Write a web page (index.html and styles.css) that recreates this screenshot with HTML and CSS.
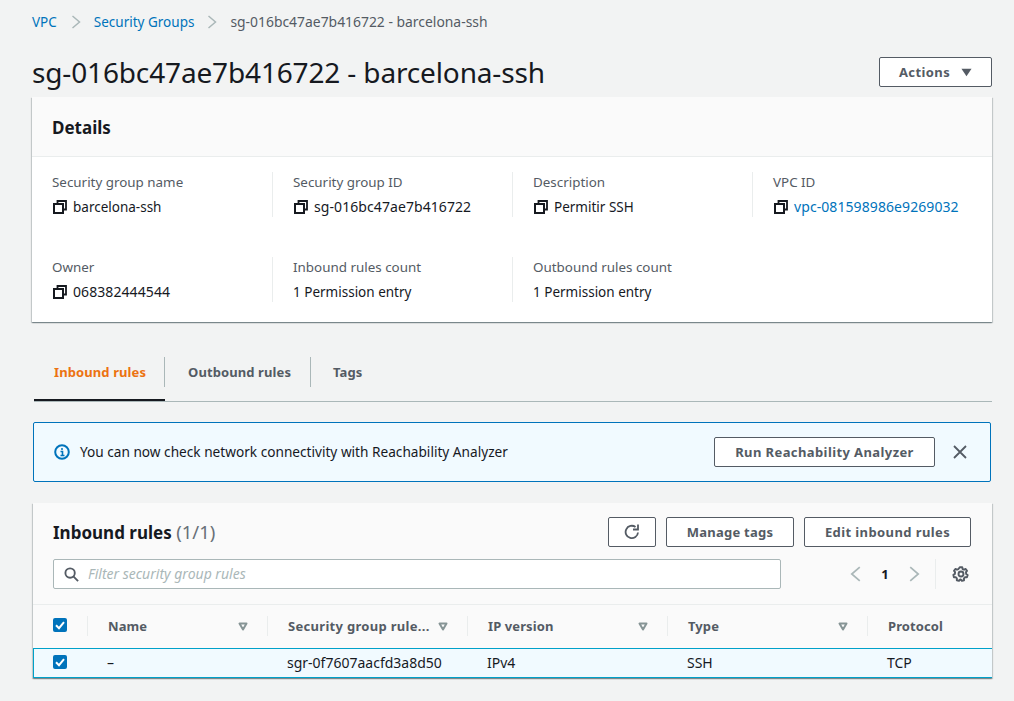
FILE: index.html
```html
<!DOCTYPE html>
<html lang="en">
<head>
    <meta charset="UTF-8">
    <meta name="viewport" content="width=device-width, initial-scale=1.0">
    <title>sg-016bc47ae7b416722 - barcelona-ssh</title>
    <link rel="stylesheet" href="styles.css">
</head>
<body>
    <svg class="icon-defs" width="0" height="0">
        <defs>
            <symbol id="copy" viewBox="0 0 14 14">
                <path d="M4.500 3V1h8.500v8.500h-2" fill="none" stroke="currentColor" stroke-width="1.800"/>
                <rect x="1" y="4" width="9" height="9" fill="none" stroke="currentColor" stroke-width="2"/>
            </symbol>
            <symbol id="caret" viewBox="0 0 10 9">
                <path d="M1.500 1.500h7L5 7.500z" fill="none" stroke="currentColor" stroke-width="2" stroke-linejoin="round"/>
            </symbol>
            <symbol id="tick" viewBox="0 0 14 14">
                <path d="M3 7.200l3 3 5-6" fill="none" stroke="#fff" stroke-width="2"/>
            </symbol>
        </defs>
    </svg>

    <nav class="breadcrumb">
        <a href="#">VPC</a>
        <svg class="crumb-sep crumb-sep-first" viewBox="0 0 10 14"><path d="M1.500 1l7 6-7 6" fill="none" stroke="currentColor" stroke-width="1.500"/></svg>
        <a href="#">Security Groups</a>
        <svg class="crumb-sep" viewBox="0 0 10 14"><path d="M1.500 1l7 6-7 6" fill="none" stroke="currentColor" stroke-width="1.500"/></svg>
        <span class="crumb-current">sg-016bc47ae7b416722 - barcelona-ssh</span>
    </nav>

    <header class="page-header">
        <h1>sg-016bc47ae7b416722 - barcelona-ssh</h1>
        <button class="btn btn-actions">Actions
            <svg class="actions-caret" viewBox="0 0 12 9"><path d="M0.500 0.500h11L6 8.500z" fill="currentColor"/></svg>
        </button>
    </header>

    <section class="card details">
        <h2 class="details-title">Details</h2>
        <div class="details-grid">
            <div class="kv">
                <div class="kv-label">Security group name</div>
                <div class="kv-value"><svg class="copy-icon"><use href="#copy"/></svg>barcelona-ssh</div>
            </div>
            <div class="kv">
                <div class="kv-label">Security group ID</div>
                <div class="kv-value kv-id"><svg class="copy-icon"><use href="#copy"/></svg>sg-016bc47ae7b416722</div>
            </div>
            <div class="kv">
                <div class="kv-label">Description</div>
                <div class="kv-value"><svg class="copy-icon"><use href="#copy"/></svg>Permitir SSH</div>
            </div>
            <div class="kv">
                <div class="kv-label">VPC ID</div>
                <div class="kv-value kv-id"><svg class="copy-icon"><use href="#copy"/></svg><a href="#">vpc-081598986e9269032</a></div>
            </div>
            <div class="kv">
                <div class="kv-label">Owner</div>
                <div class="kv-value kv-id"><svg class="copy-icon"><use href="#copy"/></svg>068382444544</div>
            </div>
            <div class="kv">
                <div class="kv-label">Inbound rules count</div>
                <div class="kv-value">1 Permission entry</div>
            </div>
            <div class="kv">
                <div class="kv-label">Outbound rules count</div>
                <div class="kv-value">1 Permission entry</div>
            </div>
        </div>
    </section>

    <div class="tabs">
        <div class="tab tab-active">Inbound rules</div>
        <div class="tab">Outbound rules</div>
        <div class="tab">Tags</div>
    </div>

    <div class="flash">
        <svg class="flash-icon" viewBox="0 0 16 16">
            <circle cx="8" cy="8" r="6.800" fill="none" stroke="currentColor" stroke-width="2"/>
            <path d="M6.500 7.500H8.500V11M6.500 11.500h4M7 5h2" fill="none" stroke="currentColor" stroke-width="1.600"/>
        </svg>
        <span class="flash-text">You can now check network connectivity with Reachability Analyzer</span>
        <button class="btn btn-run">Run Reachability Analyzer</button>
        <svg class="flash-close" viewBox="0 0 14 14"><path d="M1 1l12 12M13 1L1 13" fill="none" stroke="currentColor" stroke-width="1.800"/></svg>
    </div>

    <section class="card rules">
        <div class="rules-head">
            <div class="rules-top">
                <h2 class="rules-title">Inbound rules <span class="rules-count">(1/1)</span></h2>
                <div class="rules-actions">
                    <button class="btn btn-icon">
                        <svg viewBox="0 0 16 16" class="refresh"><path d="M14 8.500A6.200 6.200 0 1 1 11.500 3" fill="none" stroke="currentColor" stroke-width="1.800"/><path d="M14 0.500v5H9" fill="none" stroke="currentColor" stroke-width="1.800"/></svg>
                    </button>
                    <button class="btn btn-tags">Manage tags</button>
                    <button class="btn btn-edit">Edit inbound rules</button>
                </div>
            </div>
            <div class="rules-tools">
                <div class="filter">
                    <svg class="filter-icon" viewBox="0 0 16 16"><circle cx="6.500" cy="6.500" r="5" fill="none" stroke="currentColor" stroke-width="2"/><path d="M10 10l5 5" fill="none" stroke="currentColor" stroke-width="2"/></svg>
                    <span class="filter-text">Filter security group rules</span>
                </div>
                <div class="pager">
                    <svg class="pager-arrow" viewBox="0 0 10 15"><path d="M9 1L1.500 7.500 9 14" fill="none" stroke="currentColor" stroke-width="1.600"/></svg>
                    <span class="pager-num">1</span>
                    <svg class="pager-arrow" viewBox="0 0 10 15"><path d="M1 1l7.500 6.500L1 14" fill="none" stroke="currentColor" stroke-width="1.600"/></svg>
                </div>
                <div class="prefs">
                    <svg class="gear" viewBox="0 0 16 16">
                        <circle cx="8" cy="8" r="2.200" fill="none" stroke="currentColor" stroke-width="1.700"/>
                        <path d="M6.700 1h2.600l.4 1.800 1.500.7 1.700-.8 1.400 2-1.100 1.400.2 1.900 1.600 1-.8 2.400-1.900-.1-1.200 1.300.1 1.900-2.300.7-1.100-1.500H7l-1.100 1.500-2.300-.7.1-1.900-1.200-1.300-1.900.1L0 8.900l1.600-1 .2-1.900L.7 4.700l1.400-2 1.700.8 1.500-.7z" transform="translate(1.200 1.200) scale(.85)" fill="none" stroke="currentColor" stroke-width="2" stroke-linejoin="round"/>
                    </svg>
                </div>
            </div>
        </div>
        <div class="table-row table-header">
            <div class="cell cell-check"><span class="check"><svg><use href="#tick"/></svg></span></div>
            <div class="cell cell-name th">Name<svg class="sort"><use href="#caret"/></svg></div>
            <div class="cell cell-rule th">Security group rule...<svg class="sort"><use href="#caret"/></svg></div>
            <div class="cell cell-ip th">IP version<svg class="sort"><use href="#caret"/></svg></div>
            <div class="cell cell-type th">Type<svg class="sort"><use href="#caret"/></svg></div>
            <div class="cell cell-proto th">Protocol</div>
        </div>
        <div class="table-row table-selected">
            <div class="cell cell-check"><span class="check"><svg><use href="#tick"/></svg></span></div>
            <div class="cell cell-name">–</div>
            <div class="cell cell-rule">sgr-0f7607aacfd3a8d50</div>
            <div class="cell cell-ip">IPv4</div>
            <div class="cell cell-type">SSH</div>
            <div class="cell cell-proto">TCP</div>
        </div>
    </section>
</body>
</html>
```

FILE: styles.css
```css
* {
    box-sizing: border-box;
}
html, body {
    height: 701px;
    overflow: hidden;
}
body {
    margin: 0;
    padding: 0 22px 0 32px;
    background-color: #f2f3f3;
    color: #16191f;
    font-family: "Noto Sans", Arial, sans-serif;
    font-size: 13.500px;
    line-height: 20px;
}
a {
    color: #0073bb;
    text-decoration: none;
}
.icon-defs {
    position: absolute;
}
.breadcrumb {
    display: flex;
    align-items: center;
    height: 44px;
    font-size: 13.500px;
    color: #545b64;
}
.crumb-sep {
    width: 10px;
    height: 14px;
    margin: 0 13px;
    color: #aab7b8;
}
.crumb-sep-first {
    margin-left: 14px;
}
.crumb-current {
    font-size: 13.900px;
}
.page-header {
    display: flex;
    justify-content: space-between;
    align-items: center;
    height: 53px;
    padding-top: 3px;
}
.page-header h1 {
    margin: 0;
    font-size: 28px;
    font-weight: 400;
    line-height: 36px;
    letter-spacing: -0.15px;
}
.btn {
    height: 30px;
    background: #fff;
    border: 1px solid #545b64;
    border-radius: 2px;
    color: #545b64;
    font-family: inherit;
    font-size: 13px;
    font-weight: 700;
    letter-spacing: 0.25px;
    padding: 0;
}
.btn-actions {
    display: flex;
    align-items: center;
    justify-content: center;
    width: 113px;
    letter-spacing: 0.4px;
}
.actions-caret {
    width: 11px;
    height: 9px;
    margin-left: 11px;
}
.card {
    background: #fff;
    box-shadow: 0 1px 1px 0 rgba(0, 28, 36, 0.3), 1px 1px 1px 0 rgba(0, 28, 36, 0.15), -1px 1px 1px 0 rgba(0, 28, 36, 0.15);
}
.details {
    height: 225px;
}
.details-title {
    margin: 0;
    height: 60px;
    padding: 20px 20px 0;
    background: #fafafa;
    border-bottom: 1px solid #eaeded;
    font-size: 17px;
    font-weight: 700;
    line-height: 22px;
}
.details-grid {
    display: grid;
    grid-template-columns: 240px 240px 240px 240px;
    grid-auto-rows: 45px;
    row-gap: 40px;
    padding-top: 15px;
}
.kv {
    padding: 0 0 0 20px;
    border-left: 1px solid #eaeded;
}
.kv:nth-child(4n+1) {
    border-left: 0;
}
.kv-label {
    color: #545b64;
    height: 25px;
    font-size: 13.400px;
}
.kv-value {
    display: flex;
    align-items: center;
    height: 20px;
}
.kv-id {
    font-size: 14px;
    letter-spacing: 0.08px;
}
.copy-icon {
    width: 14px;
    height: 14px;
    margin-left: 1px;
    margin-right: 6px;
    flex: none;
}
.tabs {
    display: flex;
    height: 45px;
    margin: 35px 0 0 2px;
    border-bottom: 1px solid #aab7b8;
}
.tab {
    position: relative;
    height: 44px;
    padding: 5px 20px 0 22px;
    color: #545b64;
    font-size: 13px;
    font-weight: 700;
    letter-spacing: 0.1px;
}
.tab::before {
    content: "";
    position: absolute;
    right: 0;
    top: 0;
    height: 30px;
    width: 1px;
    background: #aab7b8;
}
.tab:last-child::before {
    display: none;
}
.tab-active {
    width: 131px;
    margin-right: 1px;
    padding: 5px 0 0 20px;
    color: #ec7211;
    border-bottom: 2px solid #16191f;
}
.flash {
    display: flex;
    align-items: center;
    height: 60px;
    margin: 20px 1px 0;
    padding: 0 23px 0 20px;
    background: #f1faff;
    border: 1px solid #0073bb;
    border-radius: 2px;
}
.flash-icon {
    width: 16px;
    height: 16px;
    color: #0073bb;
    flex: none;
}
.flash-text {
    margin-left: 10px;
    flex: 1;
    font-size: 13.650px;
}
.btn-run {
    width: 221px;
    letter-spacing: 0.4px;
}
.flash-close {
    width: 14px;
    height: 14px;
    margin-left: 18px;
    color: #545b64;
}
.rules {
    margin-top: 21px;
    margin-left: 1px;
    height: 175px;
    background: #fafafa;
}
.rules-head {
    height: 102px;
    padding: 14px 21px 0 20px;
    border-bottom: 1px solid #eaeded;
}
.rules-top {
    display: flex;
    justify-content: space-between;
    align-items: center;
    height: 30px;
}
.rules-title {
    margin: 0;
    font-size: 17px;
    font-weight: 700;
}
.rules-count {
    color: #687078;
    font-size: 18.500px;
    font-weight: 400;
}
.rules-actions {
    display: flex;
    gap: 10px;
}
.btn-icon {
    display: flex;
    align-items: center;
    justify-content: center;
    width: 48px;
}
.refresh {
    width: 16px;
    height: 16px;
}
.btn-tags {
    width: 128px;
}
.btn-edit {
    width: 167px;
    letter-spacing: 0.4px;
}
.rules-tools {
    display: flex;
    align-items: center;
    height: 30px;
    margin-top: 12px;
}
.filter {
    display: flex;
    align-items: center;
    width: 728px;
    height: 30px;
    padding-left: 10px;
    background: #fff;
    border: 1px solid #aab7b8;
    border-radius: 2px;
}
.filter-icon {
    width: 15px;
    height: 15px;
    color: #545b64;
}
.filter-text {
    margin-left: 9px;
    color: #aab7b8;
    font-size: 14px;
    font-style: italic;
}
.pager {
    display: flex;
    align-items: center;
    margin-left: 69px;
}
.pager-arrow {
    width: 11px;
    height: 16px;
    color: #aab7b8;
}
.pager-num {
    width: 48px;
    text-align: center;
    font-size: 13px;
    font-weight: 700;
}
.prefs {
    display: flex;
    align-items: center;
    height: 30px;
    margin-left: 15px;
    padding-left: 16px;
    border-left: 1px solid #eaeded;
}
.gear {
    width: 18px;
    height: 18px;
    color: #545b64;
}
.table-row {
    display: grid;
    grid-template-columns: 54px 180px 200px 200px 200px 1fr;
    align-items: center;
}
.table-header {
    height: 43px;
    padding-bottom: 1px;
    font-size: 13px;
}
.cell {
    display: flex;
    align-items: center;
    padding-left: 20px;
}
.cell-check .check {
    position: relative;
    top: -1px;
}
.th {
    height: 20px;
    color: #545b64;
    font-weight: 700;
    letter-spacing: 0.1px;
    border-left: 1px solid #eaeded;
    justify-content: space-between;
    padding-right: 19px;
}
.th.cell-rule {
    letter-spacing: 0.3px;
}
.th.cell-proto {
    padding-right: 0;
}
.sort {
    width: 10px;
    height: 9px;
    color: #879596;
    flex: none;
}
.check {
    display: flex;
    width: 14px;
    height: 14px;
    background: #0073bb;
    border-radius: 2px;
}
.check svg {
    width: 14px;
    height: 14px;
}
.table-selected {
    height: 30px;
    font-size: 14px;
    background: #f1faff;
    border-top: 1px solid #00a1c9;
    border-bottom: 1px solid #00a1c9;
    box-shadow: inset 1px 0 0 #00a1c9;
}
```
